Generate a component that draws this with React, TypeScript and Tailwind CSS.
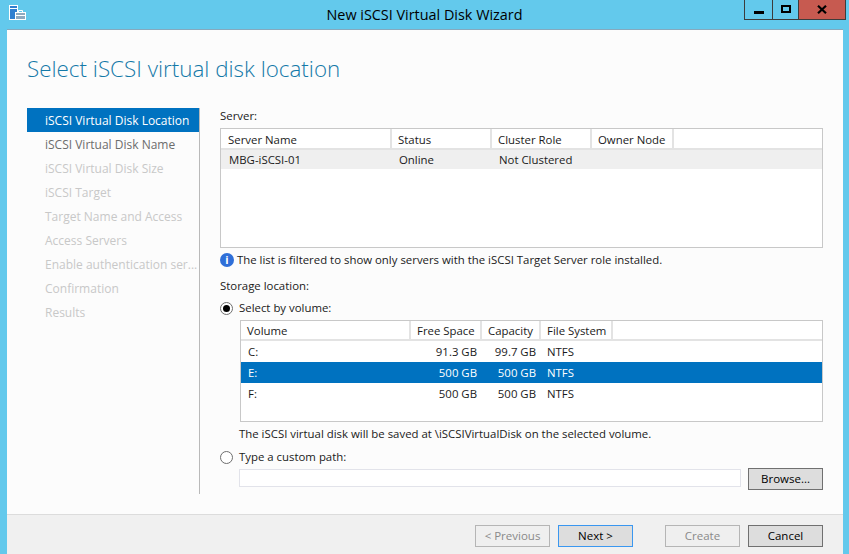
const font = { fontFamily: "'Open Sans', 'Noto Sans', sans-serif" };

const steps = [
  "iSCSI Virtual Disk Name",
  "iSCSI Virtual Disk Size",
  "iSCSI Target",
  "Target Name and Access",
  "Access Servers",
  "Enable authentication ser...",
  "Confirmation",
  "Results",
];

const volumes = [
  { name: "C:", free: "91.3 GB", cap: "99.7 GB", fs: "NTFS", selected: false },
  { name: "E:", free: "500 GB", cap: "500 GB", fs: "NTFS", selected: true },
  { name: "F:", free: "500 GB", cap: "500 GB", fs: "NTFS", selected: false },
];

const HeadCell = ({ label, width, server }: { label: string; width: string; server?: boolean }) => (
  <div className={`${width} h-full shrink-0 border-r-2 border-[#e3e3e3] pl-[6px] ${server ? "leading-[21px]" : "leading-[20px]"}`}>
    {label}
  </div>
);

const Radio = ({ checked }: { checked?: boolean }) => (
  <span className="w-[13px] h-[13px] rounded-full border border-[#6e6e6e] bg-white flex items-center justify-center shrink-0">
    {checked && <span className="w-[7px] h-[7px] rounded-full bg-black" />}
  </span>
);

const Btn = ({ label, disabled, focus }: { label: string; disabled?: boolean; focus?: boolean }) => (
  <button
    className={`w-[75px] h-[22px] border text-[11.5px] leading-[20px] ${
      disabled
        ? "border-[#b5b5b5] bg-[#efefef] text-[#8a8a8a]"
        : focus
          ? "border-[#3a97f0] bg-[#dddddd] text-black"
          : "border-[#707070] bg-[#dddddd] text-black"
    }`}
  >
    {label}
  </button>
);

const App = () => {
  return (
    <div className="w-[849px] h-[554px] bg-[#63c9ec] flex flex-col overflow-hidden relative text-[11.4px] text-[#1a1a1a]" style={font}>
      <div className="h-[29px] shrink-0 flex items-start relative">
        <svg className="ml-[9px] mt-[5px]" width="17" height="16" viewBox="0 0 17 16">
          <rect x="0.5" y="0.5" width="8" height="14" fill="#2f7fd0" stroke="#fff" />
          <rect x="1" y="3" width="7" height="1" fill="#fff" />
          <rect x="6.5" y="7.5" width="10" height="7" fill="#8fa9bf" stroke="#fff" />
          <path d="M9.5 7.5V5.5h4v2M6.5 10.5h10" fill="none" stroke="#fff" />
        </svg>
        <div className="absolute left-0 right-0 top-[5px] text-center text-[14.4px] leading-[19px] text-black">
          New iSCSI Virtual Disk Wizard
        </div>
        <div className="absolute left-[744px] top-0 h-[20px] flex border border-t-0 border-[#3c3c3c]">
          <div className="w-[28px] border-r border-[#3c3c3c] flex items-end justify-center pb-[5px]">
            <span className="w-[10px] h-[3px] bg-black" />
          </div>
          <div className="w-[26px] border-r border-[#3c3c3c] flex justify-center pt-[5px]">
            <span className="w-[10px] h-[8px] border-2 border-black" />
          </div>
          <div className="w-[46px] bg-[#c75a50] flex items-center justify-center">
            <svg width="10" height="9" viewBox="0 0 10 9">
              <path d="M1 0.8 9 8.2M9 0.8 1 8.2" stroke="#000" strokeWidth="2.2" />
            </svg>
          </div>
        </div>
      </div>

      <div className="flex-1 ml-[7px] mr-[6px] bg-[#fcfcfc] flex flex-col border-t border-[#86a9bd] min-h-0">
        <div className="flex-1 flex flex-col min-h-0">
          <h1 className="pl-[20px] pt-[22px] h-[78px] text-[22.4px] leading-[34px] font-light text-[#1479a8] shrink-0">
            Select iSCSI virtual disk location
          </h1>
          <div className="flex pl-[20px]">
            <div className="w-[173px] h-[386px] border-r border-[#b9b9b9] shrink-0 text-[12px]">
              <div className="w-[172px] h-[24px] pt-[1px] bg-[#0072c0] text-white pl-[18px] leading-[24px]">iSCSI Virtual Disk Location</div>
              <div className="h-[24px] pt-[1px] pl-[18px] leading-[24px] text-[#6c6c6c]">{steps[0]}</div>
              {steps.slice(1).map((s) => (
                <div key={s} className="h-[24px] pt-[1px] pl-[18px] leading-[24px] text-[#c8c8c8] whitespace-nowrap">
                  {s}
                </div>
              ))}
            </div>
            <div className="w-[603px] ml-[20px] flex flex-col">
              <div className="h-[20px] leading-[16px]">Server:</div>
              <div className="h-[120px] border border-[#c8c8c8] bg-white">
                <div className="h-[19px] flex pl-[1px] border-b-2 border-[#e3e3e3] box-content">
                  <HeadCell server label="Server Name" width="w-[170px]" />
                  <HeadCell server label="Status" width="w-[100px]" />
                  <HeadCell server label="Cluster Role" width="w-[100px]" />
                  <HeadCell server label="Owner Node" width="w-[82px]" />
                </div>
                <div className="h-[19px] flex bg-[#efefef] leading-[19px]">
                  <div className="w-[170px] pl-[8px]">MBG-iSCSI-01</div>
                  <div className="w-[100px] pl-[8px]">Online</div>
                  <div className="w-[100px] pl-[8px]">Not Clustered</div>
                </div>
              </div>
              <div className="h-[22px] mt-[1px] flex items-center gap-[3px]">
                <span className="w-[14px] h-[14px] rounded-full bg-[#2f6fd8] text-white text-[11px] font-bold leading-[14px] text-center">i</span>
                <span>The list is filtered to show only servers with the iSCSI Target Server role installed.</span>
              </div>
              <div className="h-[20px] mt-[6px] leading-[18px]">Storage location:</div>
              <div className="h-[22px] flex items-center gap-[6px] mb-[1px]">
                <Radio checked />
                <span>Select by volume:</span>
              </div>
              <div className="ml-[20px] h-[102px] border border-[#c8c8c8] bg-white">
                <div className="h-[18px] flex border-b-2 border-[#e3e3e3] box-content">
                  <HeadCell label="Volume" width="w-[170px]" />
                  <HeadCell label="Free Space" width="w-[71px]" />
                  <HeadCell label="Capacity" width="w-[59px]" />
                  <HeadCell label="File System" width="w-[72px]" />
                </div>
                {volumes.map((v) => (
                  <div key={v.name} className={`h-[21px] flex leading-[21px] ${v.selected ? "bg-[#0072c0] text-white" : ""}`}>
                    <div className="w-[170px] pl-[7px]">{v.name}</div>
                    <div className="w-[71px] text-right pr-[5px]">{v.free}</div>
                    <div className="w-[59px] text-right pr-[5px]">{v.cap}</div>
                    <div className="w-[72px] pl-[6px]">{v.fs}</div>
                  </div>
                ))}
              </div>
              <div className="ml-[19px] h-[24px] leading-[24px]">
                The iSCSI virtual disk will be saved at \iSCSIVirtualDisk on the selected volume.
              </div>
              <div className="h-[22px] flex items-center gap-[6px]">
                <Radio />
                <span>Type a custom path:</span>
              </div>
              <div className="ml-[19px] flex items-start gap-[7px]">
                <div className="w-[502px] h-[18px] border border-[#e2e3ea] bg-white mt-[1px]" />
                <Btn label="Browse..." />
              </div>
            </div>
          </div>
        </div>
        <div className="h-[40px] shrink-0 bg-[#f0f0f0] border-t border-[#dcdcdc] flex items-start pt-[10px] pl-[468px]">
          <Btn label="< Previous" disabled />
          <div className="ml-[8px]"><Btn label="Next >" focus /></div>
          <div className="ml-[32px]"><Btn label="Create" disabled /></div>
          <div className="ml-[8px]"><Btn label="Cancel" /></div>
        </div>
      </div>
    </div>
  );
};

export default App;
